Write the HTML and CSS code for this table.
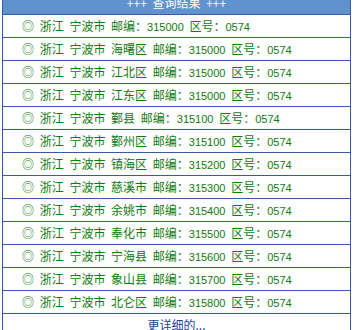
FILE: index.html
```html
<!DOCTYPE html>
<html lang="zh-CN">
<head>
<meta charset="utf-8">
<title>查询结果</title>
<link rel="stylesheet" href="styles.css">
</head>
<body>
<div class="box">
  <div class="head">+++ 查询结果 +++</div>
  <div class="row">◎ 浙江 宁波市 邮编：<span class="num">315000</span> 区号：<span class="num">0574</span></div>
  <div class="row">◎ 浙江 宁波市 海曙区 邮编：<span class="num">315000</span> 区号：<span class="num">0574</span></div>
  <div class="row">◎ 浙江 宁波市 江北区 邮编：<span class="num">315000</span> 区号：<span class="num">0574</span></div>
  <div class="row">◎ 浙江 宁波市 江东区 邮编：<span class="num">315000</span> 区号：<span class="num">0574</span></div>
  <div class="row">◎ 浙江 宁波市 鄞县 邮编：<span class="num">315100</span> 区号：<span class="num">0574</span></div>
  <div class="row">◎ 浙江 宁波市 鄞州区 邮编：<span class="num">315100</span> 区号：<span class="num">0574</span></div>
  <div class="row">◎ 浙江 宁波市 镇海区 邮编：<span class="num">315200</span> 区号：<span class="num">0574</span></div>
  <div class="row">◎ 浙江 宁波市 慈溪市 邮编：<span class="num">315300</span> 区号：<span class="num">0574</span></div>
  <div class="row">◎ 浙江 宁波市 余姚市 邮编：<span class="num">315400</span> 区号：<span class="num">0574</span></div>
  <div class="row">◎ 浙江 宁波市 奉化市 邮编：<span class="num">315500</span> 区号：<span class="num">0574</span></div>
  <div class="row">◎ 浙江 宁波市 宁海县 邮编：<span class="num">315600</span> 区号：<span class="num">0574</span></div>
  <div class="row">◎ 浙江 宁波市 象山县 邮编：<span class="num">315700</span> 区号：<span class="num">0574</span></div>
  <div class="row">◎ 浙江 宁波市 北仑区 邮编：<span class="num">315800</span> 区号：<span class="num">0574</span></div>
  <div class="more">更详细的...</div>
</div>
</body>
</html>
```
FILE: styles.css
```css
html, body {
  margin: 0;
  padding: 0;
  background: #ffffff;
}
body {
  font-family: "Noto Sans CJK SC", "Liberation Sans", sans-serif;
  font-size: 12px;
  overflow: hidden;
}
.box {
  margin: -8px 0 0 2px;
  width: 347px;
  border-left: 1px solid #3a5aa8;
  border-right: 1px solid #3a5aa8;
}
.head {
  height: 22px;
  line-height: 22px;
  background: #6092d0;
  color: #ffffff;
  text-align: center;
  border-bottom: 1px solid #3a5aa8;
  word-spacing: 3px;
}
.row {
  height: 22px;
  line-height: 22px;
  padding-left: 19px;
  color: #107a10;
  border-bottom: 1px solid #3a5aa8;
  word-spacing: 3px;
  white-space: nowrap;
}
.num {
  font-family: "Liberation Sans", sans-serif;
  font-size: 11px;
  word-spacing: 0;
}
.more {
  height: 22px;
  line-height: 22px;
  text-align: center;
  color: #1f3f95;
}
```
